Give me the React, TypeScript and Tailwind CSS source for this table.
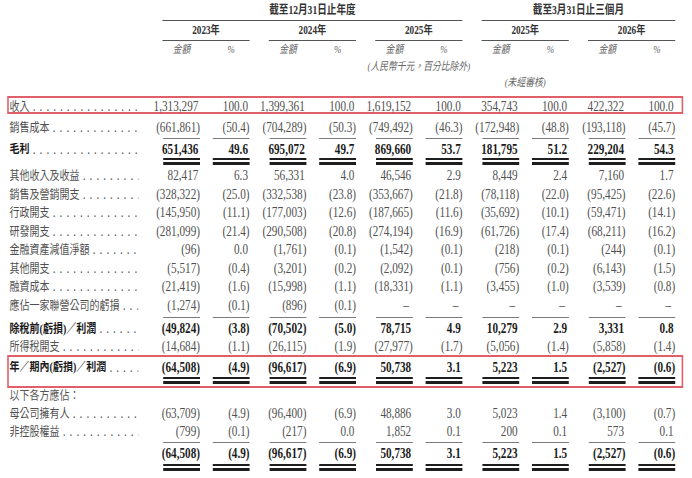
import clsx from 'clsx';

// label column + five (amount, %) pairs; the whole sheet is squeezed horizontally like the scanned page
const COLS = 'grid grid-cols-[179px_71px_62px_71px_62px_71px_62px_71px_62px_71px_62px]';
const PAIR_START = ['col-start-2', 'col-start-4', 'col-start-6', 'col-start-8', 'col-start-10'];

type Line = { label: string; values: string[]; bold?: boolean; h: string };

const revenue: Line = {
  label: '收入',
  values: ['1,313,297', '100.0', '1,399,361', '100.0', '1,619,152', '100.0', '354,743', '100.0', '422,322', '100.0'],
  h: 'h-[14px]',
};

const costOfSales: Line = {
  label: '銷售成本',
  values: ['(661,861)', '(50.4)', '(704,289)', '(50.3)', '(749,492)', '(46.3)', '(172,948)', '(48.8)', '(193,118)', '(45.7)'],
  h: 'h-[18px]',
};

const grossProfit: Line = {
  label: '毛利',
  values: ['651,436', '49.6', '695,072', '49.7', '869,660', '53.7', '181,795', '51.2', '229,204', '54.3'],
  bold: true,
  h: 'h-[17px]',
};

const expenses: Line[] = [
  { label: '其他收入及收益', values: ['82,417', '6.3', '56,331', '4.0', '46,546', '2.9', '8,449', '2.4', '7,160', '1.7'] },
  { label: '銷售及營銷開支', values: ['(328,322)', '(25.0)', '(332,538)', '(23.8)', '(353,667)', '(21.8)', '(78,118)', '(22.0)', '(95,425)', '(22.6)'] },
  { label: '行政開支', values: ['(145,950)', '(11.1)', '(177,003)', '(12.6)', '(187,665)', '(11.6)', '(35,692)', '(10.1)', '(59,471)', '(14.1)'] },
  { label: '研發開支', values: ['(281,099)', '(21.4)', '(290,508)', '(20.8)', '(274,194)', '(16.9)', '(61,726)', '(17.4)', '(68,211)', '(16.2)'] },
  { label: '金融資產減值淨額', values: ['(96)', '0.0', '(1,761)', '(0.1)', '(1,542)', '(0.1)', '(218)', '(0.1)', '(244)', '(0.1)'] },
  { label: '其他開支', values: ['(5,517)', '(0.4)', '(3,201)', '(0.2)', '(2,092)', '(0.1)', '(756)', '(0.2)', '(6,143)', '(1.5)'] },
  { label: '融資成本', values: ['(21,419)', '(1.6)', '(15,998)', '(1.1)', '(18,331)', '(1.1)', '(3,455)', '(1.0)', '(3,539)', '(0.8)'] },
  { label: '應佔一家聯營公司的虧損', values: ['(1,274)', '(0.1)', '(896)', '(0.1)', '–', '–', '–', '–', '–', '–'] },
].map((l) => ({ ...l, h: 'h-[18.5px]' }));

const beforeTax: Line = {
  label: '除稅前(虧損)／利潤',
  values: ['(49,824)', '(3.8)', '(70,502)', '(5.0)', '78,715', '4.9', '10,279', '2.9', '3,331', '0.8'],
  bold: true,
  h: 'h-[18px]',
};

const incomeTax: Line = {
  label: '所得稅開支',
  values: ['(14,684)', '(1.1)', '(26,115)', '(1.9)', '(27,977)', '(1.7)', '(5,056)', '(1.4)', '(5,858)', '(1.4)'],
  h: 'h-[18px]',
};

const netResult = ['(64,508)', '(4.9)', '(96,617)', '(6.9)', '50,738', '3.1', '5,223', '1.5', '(2,527)', '(0.6)'];

const yearLine: Line = { label: '年／期內(虧損)／利潤', values: netResult, bold: true, h: 'h-[19px]' };

const attributable: Line[] = [
  { label: '母公司擁有人', values: ['(63,709)', '(4.9)', '(96,400)', '(6.9)', '48,886', '3.0', '5,023', '1.4', '(3,100)', '(0.7)'], h: 'h-[18px]' },
  { label: '非控股權益', values: ['(799)', '(0.1)', '(217)', '0.0', '1,852', '0.1', '200', '0.1', '573', '0.1'], h: 'h-[18px]' },
];

export default function App() {
  return (
    <div className="h-[478px] w-[692px] overflow-hidden bg-white font-['Liberation_Serif','Noto_Sans_CJK_TC',serif]">
      <div className="w-[865px] origin-top-left scale-x-[0.8]">
        <Header />

        <Boxed>
          <Row line={revenue} />
        </Boxed>
        <div className="h-[4px]" />
        <Row line={costOfSales} />
        <SingleRule />
        <Row line={grossProfit} />
        <div className="h-[1px]" />
        <DoubleRule />
        <div className="h-[1px]" />
        {expenses.map((line) => (
          <Row key={line.label} line={line} />
        ))}
        <div className="h-[1px]" />
        <SingleRule />
        <Row line={beforeTax} />
        <Row line={incomeTax} />

        <Boxed>
          <Row line={yearLine} />
          <div className="h-[1px]" />
          <DoubleRule />
          <div className="h-[2px]" />
        </Boxed>

        <div className={clsx(COLS, 'h-[16px] items-center text-[#555]')}>
          <div className="whitespace-nowrap pl-[12px] pt-[1px] text-[12.5px] leading-none">以下各方應佔：</div>
        </div>
        {attributable.map((line) => (
          <Row key={line.label} line={line} />
        ))}
        <SingleRule />
        <Row line={{ label: '', values: netResult, bold: true, h: 'h-[18px]' }} noDots />
        <div className="h-[2px]" />
        <DoubleRule />
      </div>
    </div>
  );
}

function Header() {
  const pairs = ['2023年', '2024年', '2025年', '2025年', '2026年'];
  return (
    <div className="text-[#333]">
      <div className={clsx(COLS, 'h-[21px]')}>
        <div className="col-span-6 col-start-2 ml-[24px] flex items-center justify-center border-b border-[#555] text-[12px] font-bold">
          截至12月31日止年度
        </div>
        <div className="col-span-4 col-start-8 ml-[24px] flex items-center justify-center border-b border-[#555] text-[12px] font-bold">
          截至3月31日止三個月
        </div>
      </div>
      <div className={clsx(COLS, 'h-[20px]')}>
        {pairs.map((year, i) => (
          <div
            key={i}
            className={clsx(PAIR_START[i], 'col-span-2 ml-[24px] flex items-center justify-center border-b border-[#555] text-[11.5px] font-bold')}
          >
            {year}
          </div>
        ))}
      </div>
      <div className={clsx(COLS, 'h-[17px] items-center text-[11px] italic text-[#666]')}>
        <div />
        {pairs.map((_, i) => (
          <Pair key={i} />
        ))}
      </div>
      <div className={clsx(COLS, 'h-[13px] items-center text-[11px] italic text-[#666]')}>
        <div className="col-span-2 col-start-6 ml-[24px] flex justify-center whitespace-nowrap">(人民幣千元，百分比除外)</div>
      </div>
      <div className={clsx(COLS, 'h-[22px] items-center text-[11px] italic text-[#666]')}>
        <div className="col-span-2 col-start-8 ml-[24px] flex justify-center whitespace-nowrap">(未經審核)</div>
      </div>
      <div className="h-[3px]" />
    </div>
  );
}

function Pair() {
  return (
    <>
      <div className="pl-[25px] text-center">金額</div>
      <div className="pl-[16px] text-center">%</div>
    </>
  );
}

function Boxed({ children }: { children: React.ReactNode }) {
  return (
    <div className="ml-[9px] w-[845px] border-2 border-[#e0606a]">
      <div className="-ml-[11px] w-[848px]">{children}</div>
    </div>
  );
}

function Row({ line, noDots }: { line: Line; noDots?: boolean }) {
  return (
    <div className={clsx(COLS, line.h, 'items-center pt-[2px]', line.bold ? 'text-[#1c1c1c]' : 'text-[#505050]')}>
      <div className={clsx('flex items-center overflow-hidden whitespace-nowrap pl-[12px] pr-[6px]', line.bold && 'font-bold')}>
        <span className="text-[12.5px] leading-none">{line.label}</span>
        {!noDots && (
          <span className="ml-[4px] min-w-0 flex-1 overflow-hidden text-[14px] font-normal leading-none tracking-[5px] text-[#555]">
            {'.'.repeat(30)}
          </span>
        )}
      </div>
      {line.values.map((value, i) => (
        <div
          key={i}
          className={clsx(
            'whitespace-nowrap text-right text-[14px] leading-none',
            value.startsWith('(') ? 'pr-0' : value === '–' ? 'pr-[5px]' : 'pr-[2px]',
            line.bold && 'font-bold',
          )}
        >
          {value}
        </div>
      ))}
    </div>
  );
}

// thin subtotal line under every number column
function SingleRule() {
  return (
    <div className={clsx(COLS, 'h-[4px] items-center')}>
      <div />
      {Array.from({ length: 10 }).map((_, i) => (
        <div key={i} className="flex justify-end">
          <div className="h-[1px] w-[46px] bg-[#7a7a7a]" />
        </div>
      ))}
    </div>
  );
}

// heavy double line under totals
function DoubleRule() {
  return (
    <div className={clsx(COLS, 'h-[7px]')}>
      <div />
      {Array.from({ length: 10 }).map((_, i) => (
        <div key={i} className="flex h-[7px] flex-col items-end justify-between">
          <div className="h-[2px] w-[46px] bg-[#1e1e1e]" />
          <div className="h-[3px] w-[46px] bg-[#1e1e1e]" />
        </div>
      ))}
    </div>
  );
}
